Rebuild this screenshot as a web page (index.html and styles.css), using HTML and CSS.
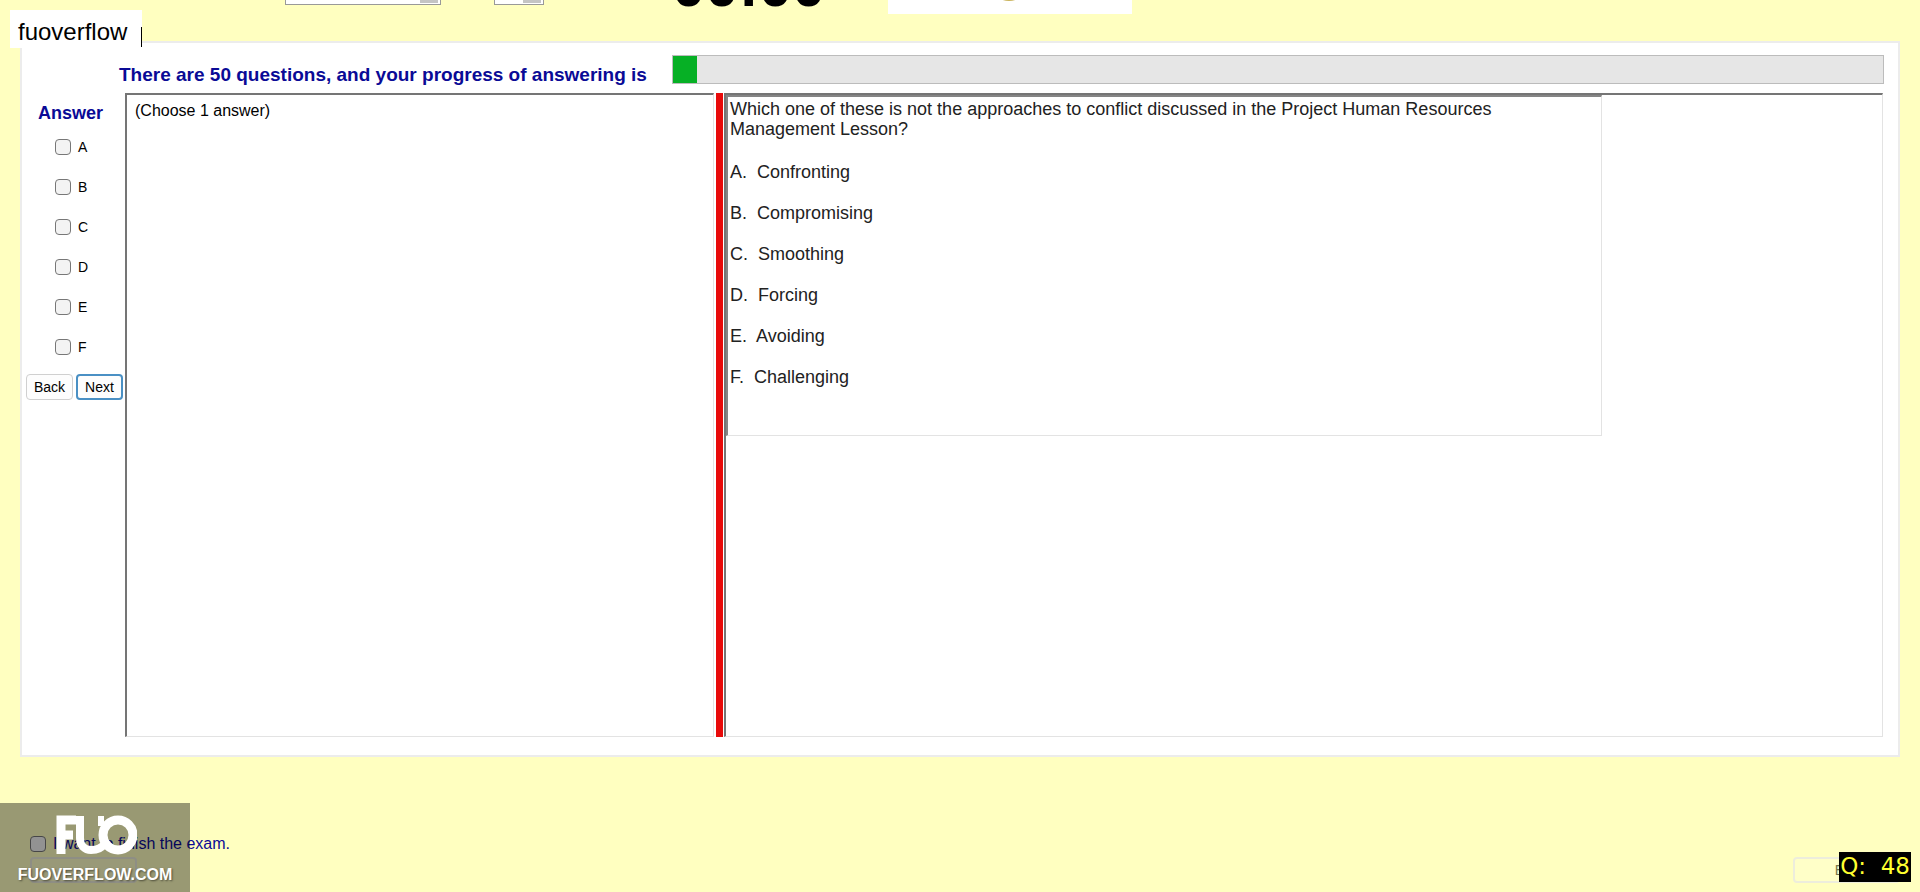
FILE: index.html
```
<!DOCTYPE html>
<html lang="en">
<head>
  <meta charset="utf-8">
  <title>Exam</title>
  <link rel="stylesheet" href="styles.css">
</head>
<body>
  <header class="topbar">
    <select class="font-name" aria-label="Font"><option></option></select>
    <select class="font-size" aria-label="Size"><option></option></select>
    <div class="timer"><span>00:00</span></div>
    <div class="picture">
      <svg width="244" height="14" viewBox="0 0 244 14">
        <circle cx="121" cy="-19" r="20" fill="#c9b25a"/>
      </svg>
    </div>
  </header>

  <main class="panel">
    <div class="progress-row">
      <label class="progress-label" for="progress">There are 50 questions, and your progress of answering is</label>
      <progress id="progress" value="2" max="100"></progress>
    </div>
    <div class="work">
      <form class="answers">
        <h2>Answer</h2>
        <label><input type="checkbox" name="answer" value="A">A</label>
        <label><input type="checkbox" name="answer" value="B">B</label>
        <label><input type="checkbox" name="answer" value="C">C</label>
        <label><input type="checkbox" name="answer" value="D">D</label>
        <label><input type="checkbox" name="answer" value="E">E</label>
        <label><input type="checkbox" name="answer" value="F">F</label>
        <div class="nav">
          <button type="button">Back</button>
          <button type="button" class="next">Next</button>
        </div>
      </form>
      <section class="pane hint">(Choose 1 answer)</section>
      <div class="splitter"></div>
      <section class="pane question-pane">
        <div class="question">
          <p class="stem">Which one of these is not the approaches to conflict discussed in the Project Human Resources Management Lesson?</p>
          <p>A.&nbsp; Confronting</p>
          <p>B.&nbsp; Compromising</p>
          <p>C.&nbsp; Smoothing</p>
          <p>D.&nbsp; Forcing</p>
          <p>E.&nbsp; Avoiding</p>
          <p>F.&nbsp; Challenging</p>
        </div>
      </section>
    </div>
  </main>

  <footer class="bottom">
    <div class="finish">
      <label><input type="checkbox" name="finish">I want to finish the exam.</label>
      <button type="button" class="wide" aria-label="Finish" disabled></button>
    </div>
    <button type="button" class="wide" disabled>Exit</button>
  </footer>

  <div class="tag">fuoverflow</div>
  <div class="watermark">
    <svg width="84" height="42" viewBox="0 0 84 42">
      <g fill="none" stroke="#fff">
        <path stroke-width="9" d="M8 40V6H23M8 21H20"/>
        <path stroke-width="8" d="M27 2V24C27 32 32 36 38 36C45 36 48 34 53 29"/>
        <path stroke-width="6" d="M48 2V12"/>
        <circle stroke-width="9" cx="65" cy="21" r="15"/>
      </g>
    </svg>
    <span>FUOVERFLOW.COM</span>
  </div>
  <div class="counter">Q:&nbsp; 48</div>
</body>
</html>
```
FILE: styles.css
```
* {
  box-sizing: border-box;
}
body {
  margin: 0;
  min-height: 100vh;
  display: flex;
  flex-direction: column;
  background-color: #ffffc0;
  font-family: "Liberation Sans", Arial, sans-serif;
  font-size: 16px;
  overflow: hidden;
}
.topbar {
  display: flex;
  height: 41px;
  padding-left: 285px;
  align-items: flex-start;
}
.topbar select {
  appearance: none;
  height: 24px;
  margin-top: -19px;
  border: 1px solid #999;
  border-radius: 0;
  background: linear-gradient(#c4c4c4, #c4c4c4) no-repeat right 2px top / 18px 21px #fff;
}
.font-name {
  width: 156px;
}
.font-size {
  width: 50px;
  margin-left: 53px;
}
.timer {
  display: flex;
  align-items: flex-end;
  height: 8px;
  width: 216px;
  margin-left: 128px;
  overflow: hidden;
  font-size: 60px;
  font-weight: bold;
  line-height: 44px;
}
.picture {
  height: 14px;
  background-color: #fff;
}
.panel {
  margin: 0 20px;
  padding: 12px 14px 18px 4px;
  border: 2px solid #ececec;
  background-color: #fff;
}
.progress-row {
  display: flex;
  height: 38px;
  padding-left: 93px;
}
.progress-label {
  width: 553px;
  padding-top: 9px;
  color: #0a0a96;
  font-size: 19px;
  font-weight: bold;
  line-height: 22px;
  white-space: nowrap;
}
progress {
  flex: 1;
  height: 29px;
  appearance: none;
  border: 1px solid #bcbcbc;
}
progress::-webkit-progress-bar {
  background-color: #e6e6e6;
}
progress::-webkit-progress-value {
  background-color: #06b025;
}
.work {
  display: flex;
  height: 644px;
  padding-right: 1px;
}
.answers {
  display: flex;
  flex-direction: column;
  width: 99px;
}
.answers h2 {
  margin: 9px 0 3px;
  padding-left: 12px;
  color: #0a0a96;
  font-size: 18px;
  line-height: 22px;
}
.answers label {
  display: flex;
  align-items: center;
  gap: 7px;
  height: 40px;
  padding-left: 29px;
  font-size: 14px;
}
input[type="checkbox"] {
  appearance: none;
  width: 16px;
  height: 16px;
  margin: 0;
  border: 1px solid #777;
  border-radius: 4px;
  background-color: #f3f3f3;
}
.nav {
  display: flex;
  gap: 3px;
  margin-top: 7px;
}
button {
  width: 47px;
  height: 26px;
  padding: 0;
  border: 1px solid #d0d0d0;
  border-radius: 4px;
  background-color: #fdfdfd;
  color: #000;
  font-family: inherit;
  font-size: 14px;
}
.next {
  border: 2px solid #4a90c4;
}
.pane {
  border: 1px solid #e3e3e3;
  border-top: 2px solid #757575;
  border-left: 2px solid #757575;
}
.hint {
  width: 589px;
  padding: 7px 8px;
}
.splitter {
  width: 7px;
  margin: 0 1px 0 2px;
  background-color: #e80a0a;
}
.question-pane {
  flex: 1;
}
.question {
  width: 876px;
  max-width: 100%;
  height: 341px;
  padding: 2px;
  border: 1px solid #e3e3e3;
  border-top: 2px solid #858585;
  border-left: 2px solid #858585;
  color: #222;
  font-size: 18px;
  line-height: 20px;
}
.question p {
  margin: 0 0 21px;
}
.question .stem {
  margin-bottom: 23px;
}
.bottom {
  display: flex;
  justify-content: space-between;
  padding: 78px 20px 8px 30px;
  align-items: flex-end;
}
.finish {
  display: flex;
  flex-direction: column;
  gap: 4px;
}
.finish label {
  display: flex;
  align-items: center;
  gap: 7px;
  color: #0a0a96;
}
.wide {
  width: 107px;
  border: 2px solid #ededdc;
  background-color: #ffffc8;
  color: #77774a;
}
.tag {
  position: absolute;
  top: 10px;
  left: 10px;
  width: 132px;
  height: 38px;
  padding: 8px;
  background-color: #fff;
  font-size: 24px;
  line-height: 28px;
}
.tag::after {
  content: "";
  position: absolute;
  right: 0;
  top: 17px;
  width: 1px;
  height: 20px;
  background-color: #000;
}
.watermark {
  position: absolute;
  left: 0;
  bottom: 0;
  display: flex;
  flex-direction: column;
  align-items: center;
  gap: 7px;
  width: 190px;
  height: 89px;
  padding-top: 11px;
  background-color: rgba(0, 0, 0, 0.4);
  color: #fff;
  font-size: 16px;
  font-weight: bold;
  line-height: 24px;
  text-shadow: 1px 1px 2px rgba(0, 0, 0, 0.5);
}
.counter {
  position: absolute;
  right: 9px;
  bottom: 10px;
  height: 30px;
  padding: 0 1px;
  background-color: #000;
  color: #ffff30;
  font-family: "DejaVu Sans", sans-serif;
  font-size: 23px;
  line-height: 28px;
}
```
